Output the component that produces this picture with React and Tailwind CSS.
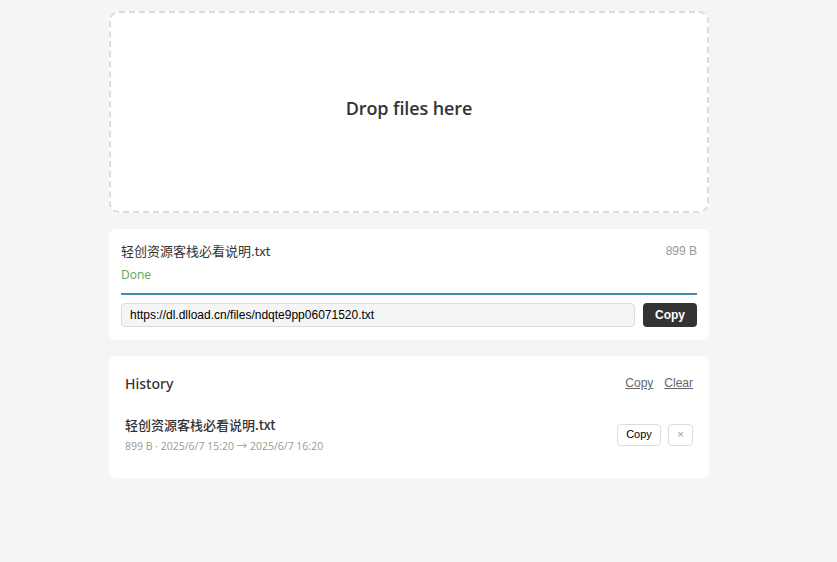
export default function App() {
  const ui = { fontFamily: '"Open Sans", "Noto Sans CJK SC", sans-serif' };
  const arial = { fontFamily: '"Liberation Sans", Arial, sans-serif' };
  return (
    <div className="min-h-[562px] bg-[#f5f5f5] pt-[11px]" style={ui}>
      <div className="ml-[109px] w-[600px] flex flex-col">
        <div className="h-[202px] rounded-[10px] border-2 border-dashed border-[#dcdcdc] bg-white flex items-center justify-center pb-[7px]">
          <span className="text-[18px] font-semibold text-[#333] tracking-[-0.1px]">Drop files here</span>
        </div>

        <div className="mt-[16px] rounded-[6px] bg-white px-[12px] pt-[12px] pb-[13px]">
          <div className="flex items-center justify-between h-[20px]">
            <span className="text-[13px] text-[#333]" style={{ fontFamily: '"Noto Sans CJK SC", sans-serif' }}>轻创资源客栈必看说明.txt</span>
            <span className="text-[12px] text-[#999]" style={arial}>899 B</span>
          </div>
          <div className="mt-[4px] h-[20px] flex items-center text-[12px] text-[#5ba55b]">Done</div>
          <div className="mt-[8px] h-[2px] bg-[#3f8fae]"></div>
          <div className="mt-[8px] flex gap-[8px]">
            <div className="flex-1 h-[24px] rounded-[4px] border border-[#dadada] bg-[#f5f5f5] flex items-center px-[8px] text-[12px] text-black" style={arial}>
              https://dl.dlload.cn/files/ndqte9pp06071520.txt
            </div>
            <button className="w-[54px] h-[24px] rounded-[4px] bg-[#333] text-white text-[12px] font-bold" style={arial}>Copy</button>
          </div>
        </div>

        <div className="mt-[16px] rounded-[6px] bg-white px-[16px] pt-[16px] pb-[24px]">
          <div className="flex items-center justify-between h-[22px]">
            <span className="text-[14px] font-medium text-[#333]" style={{ fontFamily: '"Noto Sans", sans-serif' }}>History</span>
            <div className="flex gap-[11px] text-[12px] text-[#666] underline" style={arial}>
              <span>Copy</span>
              <span>Clear</span>
            </div>
          </div>
          <div className="mt-[21px] flex items-center justify-between">
            <div className="flex flex-col">
              <span className="text-[13px] text-[#333] leading-[20px] font-medium" style={{ fontFamily: '"Noto Sans CJK SC", sans-serif' }}>轻创资源客栈必看说明.txt</span>
              <span className="mt-[3px] text-[10.5px] text-[#999] leading-[16px]">899 B · 2025/6/7 15:20 → 2025/6/7 16:20</span>
            </div>
            <div className="flex gap-[7px]">
              <button className="w-[44px] h-[22px] rounded-[4px] border border-[#ddd] bg-white text-[11px] text-black" style={arial}>Copy</button>
              <button className="w-[25px] h-[22px] rounded-[4px] border border-[#ddd] bg-white text-[11px] text-[#999]" style={arial}>×</button>
            </div>
          </div>
        </div>
      </div>
    </div>
  );
}
